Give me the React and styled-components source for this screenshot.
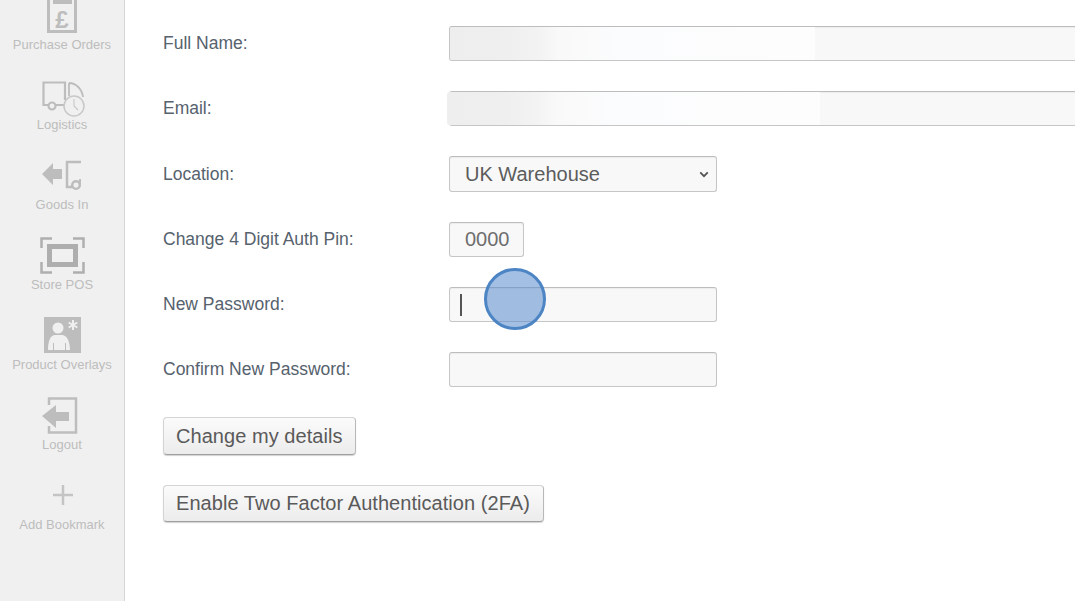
import React from 'react';
import styled, { createGlobalStyle } from 'styled-components';

const GlobalStyle = createGlobalStyle`
  html, body {
    margin: 0;
    height: 100%;
    overflow: hidden;
    background: #fff;
    font-family: "Liberation Sans", Arial, sans-serif;
  }
`;

const Page = styled.div`
  position: relative;
  display: flex;
  width: 1075px;
  height: 601px;
  overflow: hidden;
`;

const Sidebar = styled.nav`
  flex: none;
  width: 124px;
  height: 601px;
  overflow: hidden;
  background: #f0f0f0;
  border-right: 1px solid #d6d6d6;
`;

const NavList = styled.div`
  display: flex;
  flex-direction: column;
  margin-top: -28px;
`;

const NavItem = styled.a`
  display: flex;
  flex-direction: column;
  align-items: center;
  justify-content: flex-end;
  height: 80px;
  color: #bdbdbd;
  font-size: 13px;
  line-height: 14px;
  white-space: nowrap;
`;

const NavIcon = styled.svg`
  display: block;
  flex: none;
  width: 46px;
  height: 44px;
  margin-bottom: 1px;
  overflow: visible;
`;

const Content = styled.main`
  flex: 1;
  min-width: 0;
  padding: 26px 0 0 38px;
  display: flex;
  flex-direction: column;
`;

const Row = styled.div`
  display: grid;
  grid-template-columns: 286px 1fr;
  align-items: center;
  height: ${(p) => p.$height || 35}px;
  margin-bottom: 30px;
`;

const Label = styled.label`
  color: #56626d;
  font-size: 17.5px;
`;

const fieldBase = `
  box-sizing: border-box;
  height: 100%;
  border: 1px solid #c6c6c6;
  border-top-color: #bdbdbd;
  border-radius: 3px;
  background: #f8f8f8;
  font-family: "Liberation Sans", Arial, sans-serif;
  font-size: 20px;
  box-shadow: inset 0 1px 1px rgba(0, 0, 0, 0.05);
`;

const NameField = styled.div`
  ${fieldBase}
  position: relative;
  width: 700px;
  &::after {
    content: '';
    position: absolute;
    top: 0;
    bottom: 0;
    left: ${(p) => -p.$bleed}px;
    width: ${(p) => p.$blur}px;
    border-radius: 3px 0 0 3px;
    background: linear-gradient(90deg, #eeeeee 0, #efefef 60px, #f3f3f3 90px, #f9f9f9 110px, #fbfcfd 170px, #fdfdfd 100%);
  }
`;

const Field = styled.div`
  ${fieldBase}
  display: flex;
  align-items: center;
  width: ${(p) => p.$width}px;
  padding: 0 ${(p) => p.$pad}px;
  color: ${(p) => p.$color || '#5c5c5c'};
`;

const Caret = styled.span`
  width: 2px;
  height: 22px;
  background: #555;
`;

const Chevron = styled.svg`
  margin-left: auto;
  margin-right: -8px;
`;

const Button = styled.button`
  box-sizing: border-box;
  align-self: flex-start;
  width: ${(p) => p.$width}px;
  height: ${(p) => p.$height}px;
  margin-bottom: 30px;
  padding: 0 12px;
  text-align: left;
  white-space: nowrap;
  border: 1px solid #d4d4d4;
  border-bottom-color: #a0a0a0;
  border-right-color: #b8b8b8;
  border-radius: 4px;
  background: linear-gradient(#fbfbfb, #ececec);
  box-shadow: 0 1px 1px rgba(0, 0, 0, 0.18);
  color: #5a5a5a;
  font-family: "Liberation Sans", Arial, sans-serif;
  font-size: 20px;
  letter-spacing: 0.05px;
`;

const ClickMarker = styled.div`
  position: absolute;
  left: 484px;
  top: 268px;
  box-sizing: border-box;
  width: 62px;
  height: 62px;
  border: 3px solid #4c84c4;
  border-radius: 50%;
  background: rgba(88, 141, 205, 0.55);
`;

const grey = '#bdbdbd';
const bg = '#f0f0f0';

// icon paths are written in page coordinates, the viewBox follows the item's slot
const navItems = [
  {
    label: 'Purchase Orders',
    icon: (
      <>
        <path d="M48.500 -4V31.500H75.500V-4" fill="none" stroke={grey} strokeWidth="3" />
        <rect x="53" y="-4" width="19" height="8" fill={grey} />
        <text x="62" y="28" textAnchor="middle" fontSize="24" fontWeight="700" fontFamily="Liberation Sans, sans-serif" fill={grey}>£</text>
      </>
    ),
  },
  {
    label: 'Logistics',
    icon: (
      <>
        <path d="M64 105H43.500V82.500H65V100" fill="none" stroke={grey} strokeWidth="2.200" />
        <path d="M69 83c7 0 13 6 14 14M69 83v13" fill="none" stroke={grey} strokeWidth="1.800" />
        <circle cx="52" cy="106" r="3.500" fill={bg} stroke={grey} strokeWidth="2.200" />
        <circle cx="74" cy="106" r="10" fill={bg} stroke="#c8c8c8" strokeWidth="1.500" />
        <path d="M74 99v7l4 4" fill="none" stroke="#c8c8c8" strokeWidth="1.100" />
      </>
    ),
  },
  {
    label: 'Goods In',
    icon: (
      <>
        <path d="M42 174 53 163v6h9v10h-9v6z" fill={grey} />
        <path d="M81 162H67v25h5" fill="none" stroke={grey} strokeWidth="2.500" />
        <path d="M80 179v5" fill="none" stroke={grey} strokeWidth="2" />
        <circle cx="76" cy="185" r="3.800" fill={bg} stroke={grey} strokeWidth="2.500" />
      </>
    ),
  },
  {
    label: 'Store POS',
    icon: (
      <>
        <path d="M41.500 248v-9.500H52M73 238.500h10.500V248M83.500 262v10.500H73M52 272.500H41.500V262" fill="none" stroke="#aeaeae" strokeWidth="2.500" />
        <rect x="49.500" y="246.500" width="26" height="18" fill="none" stroke="#aeaeae" strokeWidth="5" />
      </>
    ),
  },
  {
    label: 'Product Overlays',
    icon: (
      <>
        <rect x="44" y="317" width="37" height="36" fill={grey} />
        <circle cx="58" cy="328" r="5.500" fill={bg} />
        <path d="M48 350c0-10 3-15 7-15h7c4 0 8 5 8 15h-4v-7h-1v7H54v-7h-1v7z" fill={bg} />
        <path d="M73 320v10M68.700 322.500l8.600 5M77.300 322.500l-8.600 5" stroke={bg} strokeWidth="2" />
      </>
    ),
  },
  {
    label: 'Logout',
    icon: (
      <>
        <path d="M49 405v-6.500h27v34H49V426" fill="none" stroke={grey} strokeWidth="2.500" />
        <path d="M42 416 56 405v7h13v9H56v7z" fill={grey} />
      </>
    ),
  },
  {
    label: 'Add Bookmark',
    icon: <path d="M63 485v20M53 495h20" stroke="#c4c4c4" strokeWidth="2.500" />,
  },
];

export default function App() {
  return (
    <Page>
      <GlobalStyle />
      <Sidebar>
        <NavList>
          {navItems.map((item, i) => (
            <NavItem key={item.label}>
              <NavIcon viewBox={`39 ${80 * i - 7} 46 44`}>{item.icon}</NavIcon>
              {item.label}
            </NavItem>
          ))}
        </NavList>
      </Sidebar>
      <Content>
        <Row>
          <Label>Full Name:</Label>
          <NameField $blur={365} $bleed={0} />
        </Row>
        <Row>
          <Label>Email:</Label>
          <NameField $blur={373} $bleed={3} />
        </Row>
        <Row $height={36}>
          <Label>Location:</Label>
          <Field $width={268} $pad={15}>
            UK Warehouse
            <Chevron width="10" height="7" viewBox="0 0 12 8">
              <path d="M1.500 1.500 6 6l4.500-4.500" fill="none" stroke="#555" strokeWidth="2.200" />
            </Chevron>
          </Field>
        </Row>
        <Row>
          <Label>Change 4 Digit Auth Pin:</Label>
          <Field $width={75} $pad={15} $color="#6e6e6e">0000</Field>
        </Row>
        <Row>
          <Label>New Password:</Label>
          <Field $width={268} $pad={10}>
            <Caret />
          </Field>
        </Row>
        <Row>
          <Label>Confirm New Password:</Label>
          <Field $width={268} $pad={10} />
        </Row>
        <Button $width={193} $height={38}>Change my details</Button>
        <Button $width={381} $height={37}>Enable Two Factor Authentication (2FA)</Button>
      </Content>
      <ClickMarker />
    </Page>
  );
}
